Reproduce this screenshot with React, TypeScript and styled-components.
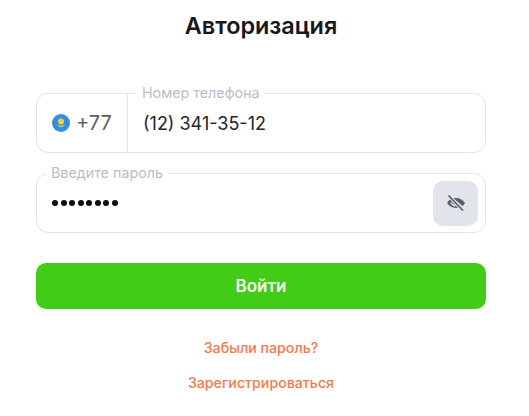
import React from "react";
import styled, { createGlobalStyle } from "styled-components";

const Global = createGlobalStyle`
  html, body { margin: 0; padding: 0; background: #fff; }
  body { font-family: Inter, "Noto Sans", sans-serif; overflow: hidden; }
`;

const Page = styled.main`
  width: 529px;
  height: 416px;
  box-sizing: border-box;
  padding: 12px 43px 0 36px;
  display: flex;
  flex-direction: column;
`;

const Title = styled.h1`
  margin: 0 0 54px;
  height: 27px;
  font-size: 23.4px;
  line-height: 27px;
  font-weight: 600;
  color: #16181d;
  text-align: center;
`;

const Field = styled.div`
  position: relative;
  height: 60px;
  box-sizing: border-box;
  border: 1px solid #e2e4e9;
  border-radius: 12px;
  display: flex;
  align-items: stretch;
  margin-bottom: 20px;
`;

const FloatLabel = styled.span<{ $left: number }>`
  position: absolute;
  top: -10px;
  left: ${(p) => p.$left}px;
  padding: 0 5px;
  background: #fff;
  font-size: 14.3px;
  line-height: 18px;
  color: #b9bdc9;
`;

const Prefix = styled.div`
  width: 91px;
  box-sizing: border-box;
  padding-left: 15px;
  border-right: 1px solid #e2e4e9;
  display: flex;
  align-items: center;
  gap: 6px;
  font-size: 20px;
  color: #5d606b;
`;

const Value = styled.div`
  flex: 1;
  padding-left: 15px;
  display: flex;
  align-items: center;
  font-size: 18px;
  color: #22242a;
`;

const Dots = styled.div`
  flex: 1;
  padding-left: 15px;
  display: flex;
  align-items: center;
  gap: 2.5px;
`;

const Dot = styled.i`
  width: 6px;
  height: 6px;
  border-radius: 50%;
  background: #0b0b10;
`;

const EyeButton = styled.button`
  align-self: center;
  width: 45px;
  height: 45px;
  margin-right: 7px;
  border: 0;
  border-radius: 10px;
  background: #e1e4eb;
  padding: 0;
  display: flex;
  align-items: center;
  justify-content: center;
`;

const Submit = styled.button`
  margin-top: 10px;
  height: 46px;
  border: 0;
  border-radius: 10px;
  background: #43cc17;
  color: #f4fff0;
  font: 600 17px Inter, sans-serif;
`;

const Links = styled.nav`
  margin-top: 30px;
  display: flex;
  flex-direction: column;
  align-items: center;
  gap: 17px;
`;

const Link = styled.a`
  font-size: 14.2px;
  line-height: 18px;
  font-weight: 500;
  color: #f9774a;
`;

const Flag = () => (
  <svg width="18" height="18" viewBox="0 0 18 18" aria-hidden="true">
    <circle cx="9" cy="9" r="9" fill="#2f8fe6" />
    <circle cx="9" cy="7.6" r="3" fill="#f0d04a" />
    <path d="M4.5 10c1.5 2.6 3 3 4.5 3s3-.4 4.5-3c-1.4 1.2-3 1.7-4.500 1.700S5.900 11.200 4.500 10Z" fill="#e6cc4c" />
  </svg>
);

const EyeOff = () => (
  <svg width="20" height="16" viewBox="0 0 20 16" fill="none" aria-hidden="true">
    <path d="M1 8c1.300-2.300 2.800-3.700 4.500-4.300L14 12c-1.300.6-2.600.9-4 .9C6 12.900 3 11 1 8Z" fill="#5a5e68" />
    <path d="M7.500 3.200c.8-.1 1.600-.2 2.500-.2 4 0 7 2 9 5-.7 1.200-1.500 2.200-2.500 3L7.500 3.200Z" fill="#5a5e68" />
    <path d="M5 7.500c.8 2 2.600 3.200 4.600 3.200" stroke="#e1e4eb" strokeWidth="1.400" />
    <path d="M3.500 1.500 16 14.500" stroke="#e1e4eb" strokeWidth="3.600" />
    <path d="M3 1 16.500 15" stroke="#5a5e68" strokeWidth="1.700" strokeLinecap="round" />
  </svg>
);

export default function App() {
  return (
    <>
      <Global />
      <Page>
        <Title>Авторизация</Title>
        <Field>
          <Prefix>
            <Flag />
            +77
          </Prefix>
          <FloatLabel $left={100}>Номер телефона</FloatLabel>
          <Value>(12) 341-35-12</Value>
        </Field>
        <Field>
          <FloatLabel $left={9}>Введите пароль</FloatLabel>
          <Dots>
            {Array.from({ length: 8 }, (_, i) => (
              <Dot key={i} />
            ))}
          </Dots>
          <EyeButton aria-label="Показать пароль">
            <EyeOff />
          </EyeButton>
        </Field>
        <Submit>Войти</Submit>
        <Links>
          <Link>Забыли пароль?</Link>
          <Link>Зарегистрироваться</Link>
        </Links>
      </Page>
    </>
  );
}
